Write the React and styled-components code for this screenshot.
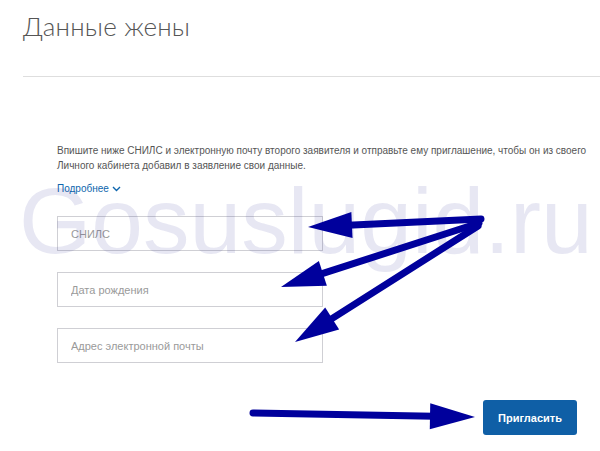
import React from 'react';
import styled, { createGlobalStyle } from 'styled-components';

const GlobalStyle = createGlobalStyle`
    html, body {
        margin: 0;
        padding: 0;
        background: #fff;
    }
`;

const Page = styled.div`
    position: relative;
    width: 600px;
    height: 451px;
    overflow: hidden;
    background: #fff;
    font-family: "Liberation Sans", Arial, sans-serif;
`;

const Header = styled.div`
    padding: 9px 0 0 23px;
`;

const Title = styled.h1`
    margin: 0;
    font-family: Lato, "Open Sans", sans-serif;
    font-weight: 300;
    font-size: 26px;
    line-height: 34px;
    color: #555;
    letter-spacing: 0.2px;
`;

const Divider = styled.div`
    margin-top: 33px;
    height: 1px;
    background: #dedede;
`;

const Content = styled.div`
    padding: 66px 12px 0 57px;
    display: flex;
    flex-direction: column;
`;

const Text = styled.p`
    margin: 0;
    font-size: 10px;
    line-height: 15px;
    color: #555;
    white-space: nowrap;
`;

const More = styled.a`
    margin-top: 10px;
    display: flex;
    align-items: center;
    gap: 3px;
    font-size: 10px;
    color: #0d65ad;
    text-decoration: none;
`;

const Fields = styled.div`
    margin-top: 22px;
    display: flex;
    flex-direction: column;
    gap: 21px;
`;

const Input = styled.input`
    box-sizing: border-box;
    width: 266px;
    height: 35px;
    padding: 0 13px;
    border: 1px solid #cfcfd4;
    background: transparent;
    font-family: "Liberation Sans", Arial, sans-serif;
    font-size: 11px;
    outline: none;

    &::placeholder {
        color: #9a9a9a;
    }
`;

const Footer = styled.div`
    margin-top: 37px;
    padding-right: 11px;
    display: flex;
    justify-content: flex-end;
`;

const Button = styled.button`
    width: 94px;
    height: 35px;
    border: none;
    border-radius: 3px;
    background: #0f5fa6;
    color: #fff;
    font-family: "Liberation Sans", Arial, sans-serif;
    font-weight: bold;
    font-size: 11px;
    cursor: pointer;
`;

const Watermark = styled.div`
    position: absolute;
    left: 19px;
    top: 166px;
    font-family: "Liberation Sans", Arial, sans-serif;
    font-size: 93px;
    line-height: 110px;
    color: rgba(40, 40, 150, 0.11);
    pointer-events: none;
    white-space: nowrap;
`;

const Arrows = styled.svg`
    position: absolute;
    left: 0;
    top: 0;
    pointer-events: none;
`;

const ARROW = '#00009c';

function Arrow({ x1, y1, x2, y2, head = 44, width = 26 }) {
    const dx = x2 - x1;
    const dy = y2 - y1;
    const len = Math.hypot(dx, dy);
    const ux = dx / len;
    const uy = dy / len;
    const bx = x2 - ux * head;
    const by = y2 - uy * head;
    const px = -uy * width / 2;
    const py = ux * width / 2;
    return (
        <g>
            <line x1={x1} y1={y1} x2={bx + ux * 4} y2={by + uy * 4} stroke={ARROW} strokeWidth="7" strokeLinecap="round" />
            <polygon points={`${x2},${y2} ${bx + px},${by + py} ${bx - px},${by - py}`} fill={ARROW} />
        </g>
    );
}

export default function App() {
    return (
        <Page>
            <GlobalStyle />
            <Header>
                <Title>Данные жены</Title>
                <Divider />
            </Header>
            <Content>
                <Text>
                    Впишите ниже СНИЛС и электронную почту второго заявителя и отправьте ему приглашение, чтобы он из своего
                    <br />
                    Личного кабинета добавил в заявление свои данные.
                </Text>
                <More href="#">
                    Подробнее
                    <svg width="9" height="6" viewBox="0 0 9 6">
                        <path d="M1 1l3.5 3.5L8 1" fill="none" stroke="#0d65ad" strokeWidth="1.4" />
                    </svg>
                </More>
                <Fields>
                    <Input placeholder="СНИЛС" />
                    <Input placeholder="Дата рождения" />
                    <Input placeholder="Адрес электронной почты" />
                </Fields>
                <Footer>
                    <Button>Пригласить</Button>
                </Footer>
            </Content>
            <Watermark>Gosuslugid.ru</Watermark>
            <Arrows width="600" height="451">
                <Arrow x1={481} y1={219} x2={308} y2={227} />
                <Arrow x1={479} y1={223} x2={281} y2={287} />
                <Arrow x1={478} y1={226} x2={295} y2={342} />
                <Arrow x1={253} y1={413} x2={475} y2={417} head={45} width={26} />
            </Arrows>
        </Page>
    );
}
